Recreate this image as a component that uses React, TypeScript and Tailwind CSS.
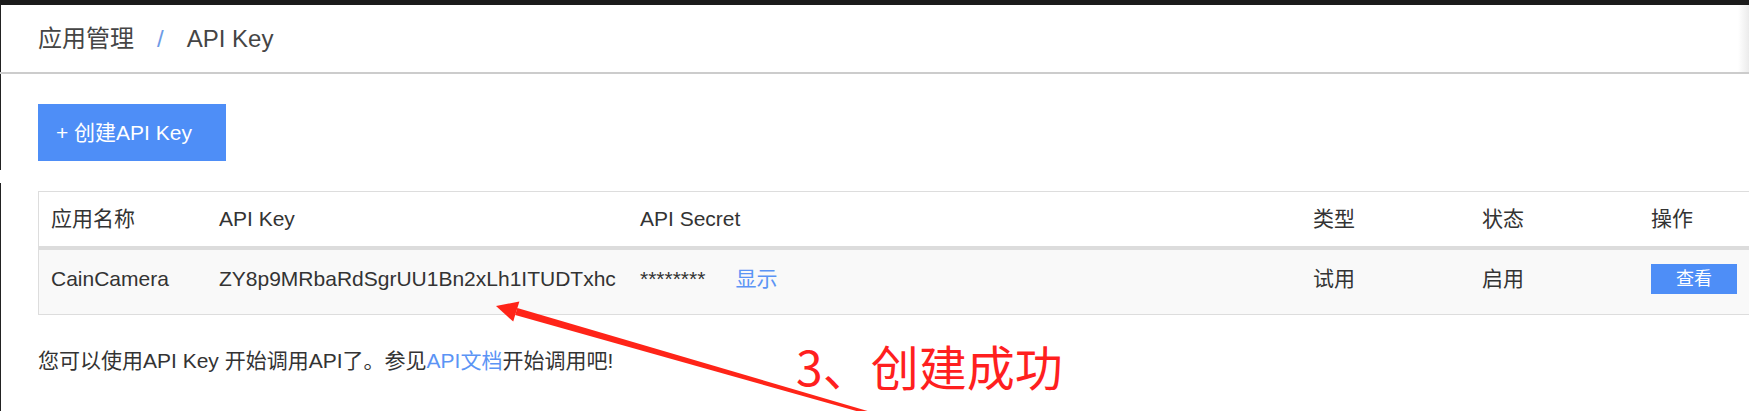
import React from "react";

// thin grey fade on the right edge of the window
const Shade: React.FC = () => (
	<div className="w-[11px] shrink-0 bg-linear-to-r from-white to-[#ebebeb]" />
);

const columns = ["应用名称", "API Key", "API Secret", "类型", "状态", "操作"];

const row = {
	name: "CainCamera",
	key: "ZY8p9MRbaRdSgrUU1Bn2xLh1ITUDTxhc",
	secret: "********",
	type: "试用",
	status: "启用",
};

const gridCols = "grid grid-cols-[168px_421px_673px_169px_169px_1fr]";

const Annotation: React.FC = () => (
	<>
		<svg className="pointer-events-none absolute inset-0" width="1749" height="411" viewBox="0 0 1749 411">
			<polygon points="496,306 513.2,321.6 519.4,301.6" fill="#ff2418" />
			<polygon points="515.2,315 517.3,308 872.3,412.4 871.3,415.2" fill="#ff2418" />
		</svg>
		<div className="pointer-events-none absolute left-[796px] top-[341px] font-['Noto_Sans_CJK_SC',sans-serif] text-[48px] leading-[48px] text-[#ff1f1f]">
			3、创建成功
		</div>
	</>
);

export default function App() {
	return (
		<div className="relative h-[411px] w-full overflow-hidden bg-white font-['Liberation_Sans','Noto_Sans_CJK_SC',sans-serif] text-[#333]">
			<div className="h-[5px] bg-[#1b1b1b]" />

			<header className="flex h-[69px] border-b-2 border-[#cccccc]">
				<div className="flex flex-1 items-center border-l border-[#222] pl-[37px] text-[24px] text-[#454545]">
					<span>应用管理</span>
					<span className="mx-[23px] text-[#6e9be6]">/</span>
					<span>API Key</span>
				</div>
				<Shade />
			</header>

			<div className="flex h-[337px]">
				<div className="flex flex-1 flex-col">
					<div className="h-[96px] border-l border-[#222] pl-[37px] pt-[30px]">
						<button className="flex h-[57px] w-[188px] items-center bg-[#4e8ef7] pl-[18px] text-[21px] text-white">
							+ 创建API Key
						</button>
					</div>

					<div className="mt-[13px] flex-1 border-l border-[#222] pl-[37px] pt-[8px]">
						<div className="border-l border-t border-[#dddddd] text-[21px]">
							<div className={`${gridCols} h-[58px] items-center border-b-4 border-[#dcdcdc]`}>
								{columns.map((c) => (
									<div key={c} className="px-3">
										{c}
									</div>
								))}
							</div>
							<div className={`${gridCols} h-[65px] border-b border-[#dddddd] bg-[#f9f9f9] pt-[14px] leading-[30px]`}>
								<div className="px-3">{row.name}</div>
								<div className="px-3">{row.key}</div>
								<div className="px-3">
									{row.secret}
									<a className="ml-[30px] text-[#5b94f5]">显示</a>
								</div>
								<div className="px-3">{row.type}</div>
								<div className="px-3">{row.status}</div>
								<div className="px-3">
									<button className="flex h-[30px] w-[86px] items-center justify-center bg-[#4e8ef7] text-[18px] text-white">
										查看
									</button>
								</div>
							</div>
						</div>

						<p className="mt-[31px] text-[21px] leading-[30px]">
							您可以使用API Key 开始调用API了。参见<a className="text-[#5b94f5]">API文档</a>开始调用吧!
						</p>
					</div>
				</div>
				<Shade />
			</div>

			<Annotation />
		</div>
	);
}
